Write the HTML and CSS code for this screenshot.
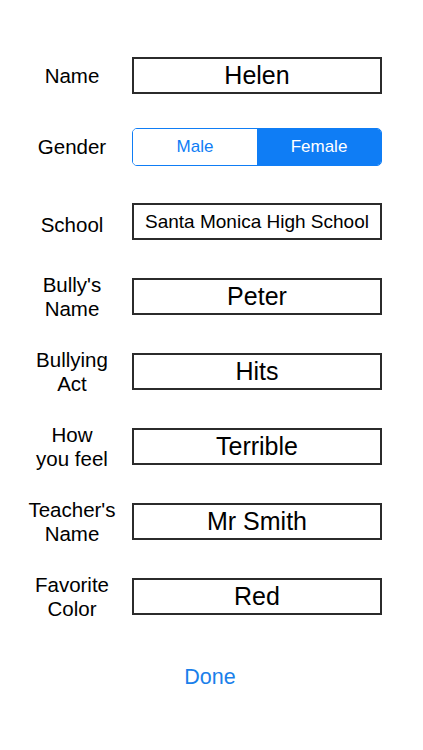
FILE: index.html
```html
<!DOCTYPE html>
<html>
<head>
<meta charset="utf-8">
<link rel="stylesheet" href="styles.css">
</head>
<body>
<div class="form">
  <div class="row">
    <div class="label">Name</div>
    <div class="field big">Helen</div>
  </div>
  <div class="row row-gender">
    <div class="label">Gender</div>
    <div class="segmented">
      <div class="seg">Male</div>
      <div class="seg active">Female</div>
    </div>
  </div>
  <div class="row">
    <div class="label label-low">School</div>
    <div class="field small">Santa Monica High School</div>
  </div>
  <div class="row">
    <div class="label">Bully's<br>Name</div>
    <div class="field big">Peter</div>
  </div>
  <div class="row">
    <div class="label">Bullying<br>Act</div>
    <div class="field big">Hits</div>
  </div>
  <div class="row">
    <div class="label">How<br>you feel</div>
    <div class="field big">Terrible</div>
  </div>
  <div class="row">
    <div class="label">Teacher's<br>Name</div>
    <div class="field big">Mr Smith</div>
  </div>
  <div class="row">
    <div class="label">Favorite<br>Color</div>
    <div class="field big">Red</div>
  </div>
  <div class="done-row">
    <span class="done">Done</span>
  </div>
</div>
</body>
</html>
```
FILE: styles.css
```css
html, body {
  margin: 0;
  padding: 0;
  background: #fff;
}
body {
  width: 423px;
  height: 750px;
  font-family: "Liberation Sans", Arial, sans-serif;
  color: #000;
}
.form {
  display: flex;
  flex-direction: column;
  gap: 38px;
  padding-top: 57px;
}
.row {
  display: flex;
  align-items: center;
  height: 37px;
}
.row-gender {
  margin-top: -4px;
}
.label {
  width: 120px;
  margin-left: 12px;
  text-align: center;
  font-size: 20.5px;
  line-height: 24px;
}
.label-low {
  padding-top: 7px;
}
.field {
  box-sizing: border-box;
  width: 250px;
  height: 37px;
  border: 2px solid #2b2b2b;
  display: flex;
  align-items: center;
  justify-content: center;
  white-space: nowrap;
}
.field.big {
  font-size: 25px;
}
.field.small {
  font-size: 19px;
}
.segmented {
  box-sizing: border-box;
  width: 250px;
  height: 38px;
  border: 1px solid #0f7df5;
  border-radius: 5px;
  display: flex;
  overflow: hidden;
}
.seg {
  flex: 1;
  display: flex;
  align-items: center;
  justify-content: center;
  font-size: 17px;
  color: #0f7df5;
  background: #fff;
}
.seg.active {
  background: #0f7df5;
  color: #fff;
}
.done-row {
  display: flex;
  justify-content: center;
  padding-right: 3px;
  margin-top: 12px;
}
.done {
  font-size: 21.5px;
  color: #1a80ea;
}
```
